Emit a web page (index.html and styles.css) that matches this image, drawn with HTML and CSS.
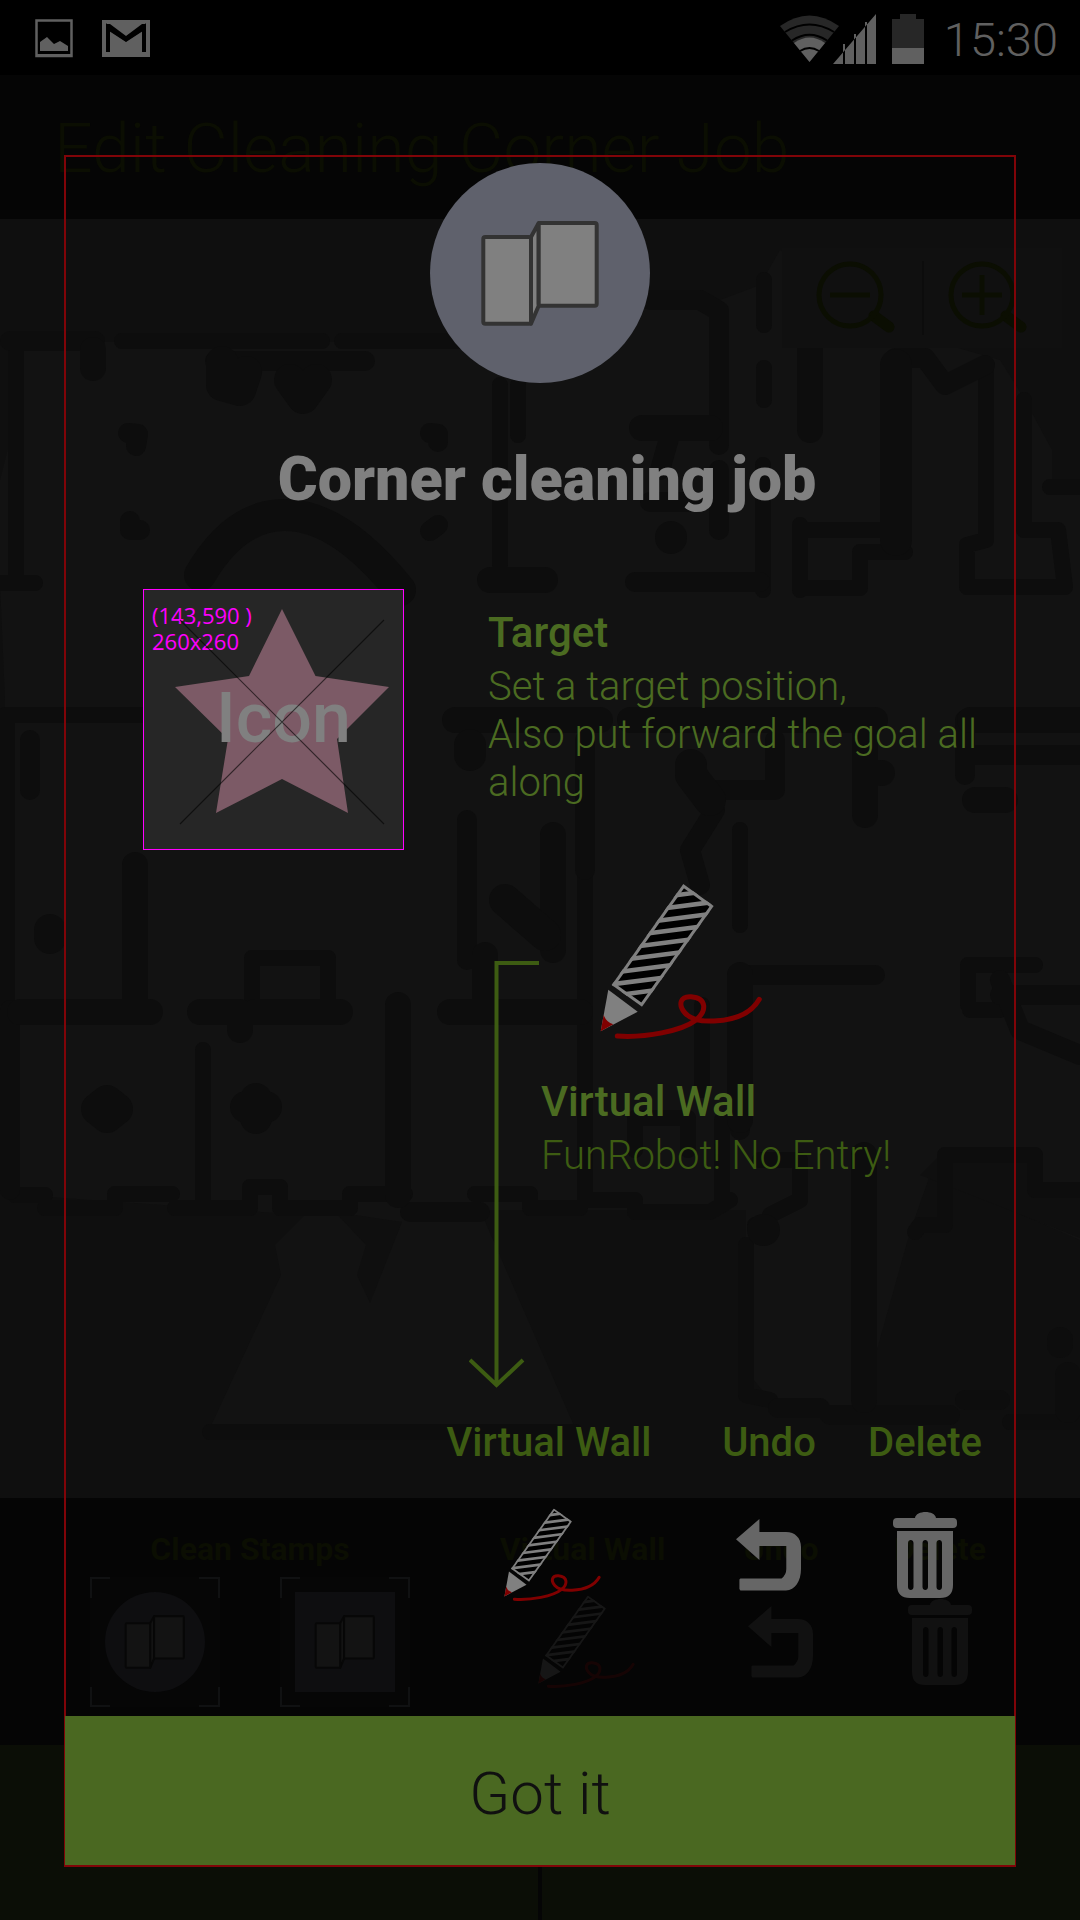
FILE: index.html
```html
<!DOCTYPE html>
<html lang="en">
<head>
<meta charset="utf-8">
<meta name="viewport" content="width=device-width, initial-scale=1">
<title>Edit Cleaning Corner Job</title>
<link rel="stylesheet" href="styles.css">
</head>
<body>
<svg class="defs" aria-hidden="true">
  <defs>
    <clipPath id="pencil-body"><path d="M83.300 0 113.700 22 42 122.700 11.700 101Z"/></clipPath>
    <symbol id="pencil" viewBox="0 0 164 156">
      <path d="M83.300 0 113.700 22 42 122.700 11.700 101Z" fill="#000"/>
      <g clip-path="url(#pencil-body)" fill="none" stroke="#808080">
        <path stroke-width="4.500" d="M70 12l70-9M61 24.700l70-9M52 37.400l70-9M43 50.100l70-9M34 62.800l70-9M25 75.500l70-9M16 88.200l70-9M7 100.900l70-9M-2 113.600l70-9"/>
        <path stroke-width="6" d="M83.300 0 113.700 22 42 122.700 11.700 101Z"/>
      </g>
      <path d="M8.300 105.700 37.700 127.700.700 147.300Z" fill="#808080"/>
      <path d="M3.700 131Q6 138 13.300 140.300L.700 147.300Z" fill="#800000"/>
      <path d="M17.300 152C45 154 82 147 96 136C107 127 107 114 91 112.700C80 112 78 121 85 129C92 137 104 137.500 114 137C138 136 152 128 159.300 115.300" fill="none" stroke="#800000" stroke-width="5" stroke-linecap="round"/>
    </symbol>
    <symbol id="corner" viewBox="50 57 121 109">
      <g class="corner-shape" stroke-width="4" stroke-linejoin="round">
        <path d="M101 75 108.700 61V143.700L101 161.700Z"/>
        <rect x="53.300" y="75" width="47.700" height="86.700" rx="2"/>
        <rect x="108.700" y="61" width="58" height="82.700" rx="2"/>
      </g>
    </symbol>
    <symbol id="undo" viewBox="0 0 66 72">
      <path fill="currentColor" d="M0 20.300 23.400 0V13H50C59 13 65 19 65 28V50C65 62 59 71.400 50 71.400H4.400L3.400 70V60.400L4.400 59.400H45.500Q50.300 56 50.300 50V27H23.400V41Z"/>
    </symbol>
    <symbol id="trash" viewBox="0 0 64 86">
      <path fill="currentColor" fill-rule="evenodd" d="M22 6C23-2 42-2 43 6H60Q64 6 64 10V12Q64 16 60 16H4Q0 16 0 12V10Q0 6 4 6ZM4 19H60V73Q60 86 47 86H17Q4 86 4 73ZM15 31V75C15 79 20.500 79 20.500 75V31C20.500 27 15 27 15 31ZM29.500 31V75C29.500 79 35 79 35 75V31C35 27 29.500 27 29.500 31ZM43.500 31V75C43.500 79 49 79 49 75V31C49 27 43.500 27 43.500 31Z"/>
    </symbol>
    <symbol id="frame" viewBox="0 0 130 130">
      <path fill="none" stroke="#101112" stroke-width="2" d="M1 21V1H20M109 1H129V21M129 110V129H109M20 129H1V110"/>
    </symbol>
  </defs>
</svg>

<div class="page">
  <div class="status">
    <div class="status-group">
      <svg class="ic-photo" viewBox="0 0 38 39"><path d="M1.500 1.500H36.500V37H1.500Z" fill="none" stroke="#606060" stroke-width="2.500"/><path fill="#606060" d="M1 35H37V37H1ZM5 32V23L12 18 19 25 25 22 33 27V32Z"/></svg>
      <svg class="ic-mail" viewBox="0 0 48 37"><path fill="#606060" d="M0 0H48V37H0Z"/><path d="M6 32V7L24 19 42 7V32" fill="none" stroke="#000" stroke-width="4"/><path d="M4 4H8L24 16 40 4H44V9L24 22 4 9Z"/></svg>
    </div>
    <div class="status-group status-right">
      <svg class="ic-wifi" viewBox="0 0 59 47"><path fill="#272727" d="M0 11Q29.500-10 59 11L29.500 47Z"/><path fill="#606060" d="M14 28Q29.500 17 45 28L29.500 47Z"/><path fill="none" stroke="#000" stroke-width="2" d="M5 17Q29.500 2 54 17M12 25.500Q29.500 14 47 25.500M20 36Q29.500 30 39 36"/></svg>
      <svg class="ic-signal" viewBox="0 0 43 50"><path fill="#606060" d="M43 0V50H0ZM10 30V50H12V30ZM21 20V50H23V20ZM32 8V50H34V8Z" fill-rule="evenodd"/></svg>
      <svg class="ic-battery" viewBox="0 0 32 50"><path fill="#272727" d="M8 0H24V5H32V34H0V5H8Z"/><path fill="#606060" d="M0 34H32V50H0Z"/></svg>
      <span class="clock">15:30</span>
    </div>
  </div>

  <div class="appbar">Edit Cleaning Corner Job</div>

  <div class="map">
    <svg class="floorplan" viewBox="0 219 1080 1279" preserveAspectRatio="none" aria-hidden="true">
      <path fill="#121212" d="M15 342H490L540 300H720L760 285 780 250 930 340 1000 360 1025 400 1052 450V480H1080V1240L930 1175 910 1232 860 1410 770 1400 746 1370V1210H480L575 1428H210L281 1275 275 1245 305 1215 20 1195 5 1100V700L0 583V480L10 440Z"/>
      <path fill="#0f0f0f" d="M335 1212 366 1245 357 1275 370 1303 402 1222ZM920 1175 1080 1238V1190H1035V1155H940Z"/>
      <g class="walls">
        <path stroke-width="16" d="M122 341H322M342 341H500M16 345V580M0 583H35M518 385V435M764 280V325M764 368V400M763 465V590M800 525V590M803 530H900M803 588H860V552H905M986 370V540L967 545V587H1065L1058 530H1025M1024 400V530M1050 487H1080M740 830V925M5 715H145M7 715V1000M252 1010V958H328V1010M45 1208H115V1194H172M175 1208H250V1187H280V1208H350V1194H405M475 1194H530V1208H580M585 870V1200H635V1212H710L730 1200M702 1005V1090M635 1150V1118H688V1150M760 1160H800V1200L770 1215M746 1245V1395L770 1400M915 1232 920 1225H945V1155H1035V1190H1080M203 1050V1200M210 1432H575M968 1005V965H1035M755 1225H770M1010 1422H1080M500 385V565M970 1010H1000V985M15 1195H45M722 1120V1205"/>
        <path stroke-width="20" d="M10 341H95M215 361H365M650 300H700L719 311V445M719 470V530M670 435 660 470M635 582H760M650 502H700M585 740V870M700 790H775V740M715 810 690 850 700 885M740 975H875M1000 995H1080M1000 980 1020 1030 1080 1055M965 720V775M965 755H1080M740 990V1130M830 1415H950M965 1400H1000M410 1212H480M467 820V960M778 1408H820M10 1010V1190M895 358H925L945 385 985 365M30 740V790"/>
        <path stroke-width="26" d="M93 350V368M642 428H710M810 348V430M455 720H600M630 720H875M865 735V815M553 835V950M970 720H1080M975 800H1005M135 865V1000M20 1012H150M200 1012H240V1030M255 1012H340M485 955V1012M450 1012H580M398 1005V1195M490 580H545M864 1155V1400M1060 1340V1345M1068 1375V1410M881 773H882M740 975V1120"/>
        <path stroke-width="32" d="M200 575Q235 515 285 515 340 515 400 590M896 365V540M222 362V385L240 390 246 372M290 380 303 398 316 380M470 745V755M691 765V775L710 800M505 900 545 935M763 1230H764M97 1109 107 1101 117 1109 107 1117ZM246 1107H266M256 1099V1118M671 537V538M50 930V938"/>
        <path stroke-width="20" d="M128 433 138 434 136 446M430 433 438 434V442M130 521 130 530 140 530M438 525 430 531"/>
      </g>
    </svg>
    <div class="zoom">
      <button class="zoom-btn" type="button" aria-label="Zoom out"><svg viewBox="0 0 80 74"><path d="M58 55 73 66"/><circle cx="34" cy="34" r="31"/><path d="M14 34H54"/></svg></button>
      <button class="zoom-btn" type="button" aria-label="Zoom in"><svg viewBox="0 0 80 74"><path d="M58 55 73 66"/><circle cx="34" cy="34" r="31"/><path d="M14 34H54M34 14V54"/></svg></button>
    </div>
  </div>

  <div class="tools">
    <div class="tool tool-stamps">
      <span>Clean Stamps</span>
      <div class="stamps">
        <button class="stamp" type="button" aria-label="Round stamp"><svg class="stamp-frame"><use href="#frame"/></svg><span class="swatch round"><svg class="corner-sm"><use href="#corner"/></svg></span></button>
        <button class="stamp" type="button" aria-label="Square stamp"><svg class="stamp-frame"><use href="#frame"/></svg><span class="swatch"><svg class="corner-sm"><use href="#corner"/></svg></span></button>
      </div>
    </div>
    <button class="tool" type="button"><span>Virtual Wall</span><span class="tool-icon"><svg class="pencil-sm dim"><use href="#pencil"/></svg></span></button>
    <button class="tool" type="button"><span>Undo</span><span class="tool-icon"><svg class="undo"><use href="#undo"/></svg></span></button>
    <button class="tool" type="button"><span>Delete</span><span class="tool-icon"><svg class="trash"><use href="#trash"/></svg></span></button>
  </div>

  <div class="footer"><div></div><div></div></div>

  <section class="guide" role="dialog" aria-labelledby="guide-title">
    <div class="badge"><svg class="corner-lg"><use href="#corner"/></svg></div>
    <h1 id="guide-title">Corner cleaning job</h1>

    <div class="target">
      <div class="placeholder">
        <svg class="star" viewBox="0 0 261 261" aria-hidden="true">
          <path fill="#7c5a66" d="M139 20 172.500 87 246 98 194 150 205 224 139 190 73 224 85 150 32 98 106 87Z"/>
        </svg>
        <span class="coords">(143,590 )<br>260x260</span>
        <span class="placeholder-text">Icon</span>
        <svg class="star" viewBox="0 0 261 261" aria-hidden="true"><path stroke="#000" stroke-opacity=".6" stroke-width="1.200" d="M37 31 241 235M241 31 37 235"/></svg>
      </div>
      <div class="copy">
        <h2>Target</h2>
        <p>Set a target position,<br>Also put forward the goal all along</p>
      </div>
    </div>

    <div class="wall">
      <svg class="arrow" viewBox="0 0 70 427" aria-hidden="true"><path fill="none" stroke="#3d5c12" stroke-width="4" d="M70 2H27.500V424M1 399 27.500 424 54 399"/></svg>
      <div class="copy">
        <svg class="pencil-lg"><use href="#pencil"/></svg>
        <h2>Virtual Wall</h2>
        <p class="deep">FunRobot! No Entry!</p>
      </div>
    </div>

    <div class="actions">
      <button class="action" type="button"><span>Virtual Wall</span><span class="action-icon"><svg class="pencil-sm"><use href="#pencil"/></svg></span></button>
      <button class="action" type="button"><span>Undo</span><span class="action-icon"><svg class="undo"><use href="#undo"/></svg></span></button>
      <button class="action" type="button"><span>Delete</span><span class="action-icon"><svg class="trash"><use href="#trash"/></svg></span></button>
    </div>

    <button class="confirm" type="button">Got it</button>
  </section>
</div>
</body>
</html>
```
FILE: styles.css
```css
* { box-sizing: border-box; }
body {
  margin: 0;
  background: #000;
  font-family: Roboto, "Liberation Sans", sans-serif;
}
h1, h2, p { margin: 0; }
svg { display: block; }
button {
  margin: 0;
  padding: 0;
  border: 0;
  background: none;
  font: inherit;
  color: inherit;
  cursor: pointer;
}
.defs { position: absolute; width: 0; height: 0; }

.page {
  position: relative;
  display: flex;
  flex-direction: column;
  min-height: 100vh;
}

/* status bar */
.status {
  display: flex;
  justify-content: space-between;
  height: 75px;
  padding: 0 22px 0 35px;
  background: #000;
  color: #606060;
}
.status-group { display: flex; align-items: center; gap: 29px; padding-top: 2px; }
.ic-photo { width: 38px; height: 39px; }
.ic-mail { width: 48px; height: 37px; }
.status-right { gap: 16px; }
.ic-wifi { width: 59px; height: 47px; }
.ic-signal { width: 43px; height: 50px; margin-left: -22px; }
.ic-battery { width: 32px; height: 50px; }
.clock { margin-left: 4px; padding-top: 2px; font-size: 47px; line-height: 56px; font-weight: 300; }

/* dimmed screen behind the guide */
.appbar {
  height: 144px;
  padding: 34px 54px;
  background: #050505;
  color: #0b0e02;
  font-size: 68px;
  line-height: 80px;
  font-weight: 300;
}
.map { display: flex; position: relative; flex: 1; background: #0f0f0f; min-height: 1279px; }
.floorplan { position: absolute; inset: 0; width: 100%; height: 100%; }
.walls { fill: none; stroke: #0d0d0d; stroke-linecap: round; stroke-linejoin: round; }
.zoom {
  position: relative;
  display: flex;
  align-items: center;
  width: 280px;
  height: 100px;
  margin: 29px 18px 0 auto;
  background: #101010;
}
.zoom-btn { flex: 0 0 140px; height: 74px; padding-left: 34px; }
.zoom-btn + .zoom-btn { padding-left: 24px; border-left: 2px solid #0c0c0c; }
.zoom-btn svg { width: 80px; height: 74px; fill: none; stroke: #0b0e02; stroke-width: 5px; }
.zoom-btn path:first-child { stroke-width: 11px; stroke-linecap: round; }

.tools {
  display: grid;
  grid-template-columns: 464fr 237fr 160fr 158fr;
  height: 247px;
  padding: 32px 61px 0 0;
  background: #050505;
  color: #0b0e02;
  font-size: 32px;
  line-height: 38px;
  font-weight: 700;
}
.tool { display: flex; flex-direction: column; align-items: center; gap: 9px; }
.tool-stamps { padding-left: 36px; }
.tool-icon { display: grid; place-items: center; height: 130px; color: #111; }
.stamps { display: flex; gap: 60px; }
.stamp { display: grid; place-items: center; width: 130px; height: 130px; background: #060606; }
.stamp > * { grid-area: 1 / 1; }
.stamp-frame { width: 130px; height: 130px; }
.swatch { display: grid; place-items: center; width: 100px; height: 100px; background: #0e0e10; }
.round { border-radius: 50%; }
.corner-shape { fill: var(--face); stroke: var(--edge); }
.corner-sm { --face: #131313; --edge: #070707; width: 62px; height: 56px; }
.dim { opacity: .14; }

.footer { display: flex; gap: 4px; height: 175px; background: #050505; }
.footer div { flex: 1; background: #0b0e06; }

/* guide */
.guide {
  position: absolute;
  inset: 155px 64px 53px;
  display: flex;
  flex-direction: column;
  border: 2px solid #800408;
}
.badge {
  display: grid;
  place-items: center;
  flex: none;
  width: 220px;
  height: 220px;
  margin: 6px auto 0;
  border-radius: 50%;
  background: #5f616c;
}
.corner-lg { --face: #808080; --edge: #333; width: 121px; height: 109px; }
h1 {
  margin-top: 60px;
  padding-left: 14px;
  color: #808080;
  font-size: 61px;
  line-height: 72px;
  font-weight: 900;
  text-align: center;
}
.target { display: flex; gap: 84px; margin-top: 74px; padding-left: 77px; }
.placeholder {
  position: relative;
  flex: none;
  width: 261px;
  height: 261px;
  border: 1px solid #f0f;
  background: #262626;
}
.star { position: absolute; inset: -1px; width: 261px; height: 261px; }
.coords {
  position: absolute;
  top: 12px;
  left: 8px;
  color: #f0f;
  font-family: "Open Sans", "Noto Sans", sans-serif;
  font-size: 22px;
  line-height: 26px;
}
.placeholder-text {
  position: absolute;
  top: 88px;
  left: 72px;
  color: #808080;
  font-size: 70px;
  line-height: 80px;
  font-weight: 500;
}
.copy { color: #4b6b21; }
.copy h2 { font-size: 42px; line-height: 48px; font-weight: 500; }
.copy p { margin-top: 6px; font-size: 40px; line-height: 48px; font-weight: 300; }
.copy .deep { color: #3d5c12; }
.target .copy { padding: 20px 32px 0 0; }

.wall { display: flex; gap: 2px; margin-top: 34px; padding-left: 403px; }
.arrow { flex: none; width: 70px; height: 427px; margin-top: 77px; }
.pencil-lg { width: 164px; height: 156px; margin: 0 0 38px 59px; }

.actions {
  display: grid;
  grid-template-columns: 264fr 176fr 136fr;
  margin-top: 31px;
  padding: 0 21px 0 351px;
  color: #3d5c12;
  font-size: 40px;
  line-height: 48px;
  font-weight: 500;
}
.action { display: flex; flex-direction: column; align-items: center; gap: 40px; }
.action-icon { display: grid; place-items: center; height: 96px; color: #666; }
.pencil-sm { width: 98px; height: 94px; margin-left: 8px; }
.undo { width: 66px; height: 72px; }
.trash { width: 64px; height: 86px; }

.confirm {
  height: 149px;
  margin: auto -1px 0;
  padding-top: 6px;
  background: #4a6821;
  color: #101010;
  font-size: 60px;
  line-height: 72px;
  font-weight: 300;
}
```
